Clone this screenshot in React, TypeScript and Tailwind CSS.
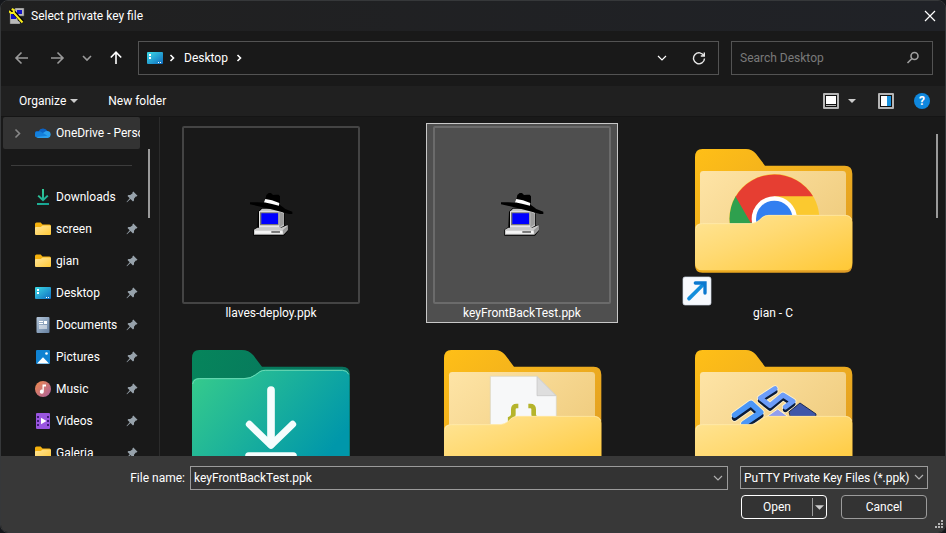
import type { ReactNode } from "react";

const places = [
  { name: "Downloads", icon: <DownloadIcon /> },
  { name: "screen", icon: <FolderIcon /> },
  { name: "gian", icon: <FolderIcon /> },
  { name: "Desktop", icon: <DesktopIcon /> },
  { name: "Documents", icon: <DocumentIcon /> },
  { name: "Pictures", icon: <PictureIcon /> },
  { name: "Music", icon: <MusicIcon /> },
  { name: "Videos", icon: <VideoIcon /> },
  { name: "Galeria", icon: <FolderIcon /> },
];

function DownloadIcon() {
  return (
    <svg className="size-4" viewBox="0 0 16 16" fill="none" stroke="url(#dl)" strokeWidth="2">
      <defs>
        <linearGradient id="dl" gradientUnits="userSpaceOnUse" x1="0" y1="0" x2="10" y2="16">
          <stop stopColor="#3bd69a" />
          <stop offset="1" stopColor="#16a394" />
        </linearGradient>
      </defs>
      <path d="M8 0v11M3.200 6.600 8 11.200l4.800-4.600M2 15h12" />
    </svg>
  );
}

function FolderIcon() {
  return (
    <svg className="size-4" viewBox="0 0 16 16">
      <path d="M0 3Q0 1.500 1.500 1.500H5.600L7.500 3.500H14.500Q16 3.500 16 5V13H0Z" fill="#f5b10d" />
      <path d="M0 7Q0 6 1 6H5.800L7.600 4.600H15Q16 4.600 16 5.600V13Q16 14 15 14H1Q0 14 0 13Z" fill="url(#front)" />
    </svg>
  );
}

function DesktopIcon() {
  return (
    <svg className="size-4" viewBox="0 0 16 16">
      <defs>
        <linearGradient id="desk" x1="0" y1="0" x2="1" y2="1">
          <stop stopColor="#3ddbe6" />
          <stop offset="1" stopColor="#0f6cc0" />
        </linearGradient>
      </defs>
      <rect y="2" width="16" height="12" rx="1" fill="url(#desk)" />
      <path d="M2 4h2v2H2zM2 7h2v2H2zM11 12h1v1h-1zM13 12h1v1h-1z" fill="#fff" />
    </svg>
  );
}

function DocumentIcon() {
  return (
    <svg className="size-4" viewBox="0 0 16 16">
      <defs>
        <linearGradient id="doc" x1="0" y1="0" x2="1" y2="1">
          <stop stopColor="#b4c6da" />
          <stop offset="1" stopColor="#6580a0" />
        </linearGradient>
      </defs>
      <rect x="1.500" width="13" height="16" rx="1" fill="url(#doc)" />
      <path d="M4 4h4v1H4zM4 6h4v1H4zM9 4h3v3H9zM4 8.500h8v1H4zM4 10.500h8v1H4z" fill="#fff" />
    </svg>
  );
}

function PictureIcon() {
  return (
    <svg className="size-4" viewBox="0 0 16 16">
      <rect x="1" y="1" width="14" height="14" rx="1" fill="#0f82d2" />
      <path d="M2 14.500 8 8.200l6 6.300Z" fill="#fff" />
      <circle cx="11.500" cy="4.500" r="1.300" fill="#fff" />
    </svg>
  );
}

function MusicIcon() {
  return (
    <svg className="size-4" viewBox="0 0 16 16">
      <defs>
        <linearGradient id="mus" x1="0" y1="0" x2="1" y2="1">
          <stop stopColor="#f08a4b" />
          <stop offset="1" stopColor="#a9609e" />
        </linearGradient>
      </defs>
      <circle cx="8" cy="8" r="8" fill="url(#mus)" />
      <path d="M7.500 3.500h3.500v2H8.800v5.200a2 2 0 1 1-1.300-1.900Z" fill="#fff" />
    </svg>
  );
}

function VideoIcon() {
  return (
    <svg className="size-4" viewBox="0 0 16 16">
      <rect x="1" width="14" height="16" rx="1" fill="#9a55e0" />
      <path d="M2 3h2v2H2zM2 7h2v2H2zM2 11h2v2H2zM12 3h2v2h-2zM12 7h2v2h-2zM12 11h2v2h-2z" fill="#3f1d77" />
      <path d="M6 4.800 11.500 8 6 11.200Z" fill="#fff" />
    </svg>
  );
}

function CloudIcon() {
  return (
    <svg className="size-4" viewBox="0 0 16 16">
      <path d="M3.500 6.500a5 5 0 0 1 9-.500L8 11 1 12A3 3 0 0 1 3.500 6.500Z" fill="#0b63c5" />
      <path d="M12.200 6.100A3.500 3.500 0 0 1 13 13H3.500A3.300 3.300 0 0 1 1 12L9.500 6.900a4 4 0 0 1 2.700-.8Z" fill="#2aa0ee" />
      <path d="M5 6.200 12.500 10.800 1.200 12A3 3 0 0 1 3 6.500Z" fill="#1480dc" />
    </svg>
  );
}

function Pin() {
  return (
    <svg className="size-3 shrink-0" viewBox="0 0 12 12">
      <path d="M7.300.5 11.500 4.700 10.600 5.600 9.800 5.500 8 7.700V9.600L7 10.500 4.500 8.100 1 11.300.5 10.900 3.700 7.300 1.500 5 2.400 4.100H4.200L6.600 2.200 6.400 1.400Z" fill="#97a2ab" />
    </svg>
  );
}

function Chevron({ className }: { className: string }) {
  return (
    <svg className={className} viewBox="0 0 10 10" fill="none" stroke="currentColor" strokeWidth="1.200">
      <path d="M1 3 5 7 9 3" />
    </svg>
  );
}

function Crumb() {
  return (
    <svg className="size-2" viewBox="0 0 8 8" fill="none" stroke="#fff" strokeWidth="1.600">
      <path d="M2.500 1 5.500 4 2.500 7" />
    </svg>
  );
}

function Caret() {
  return (
    <svg className="h-1 w-2" viewBox="0 0 8 4">
      <path d="M0 0H8L4 4Z" fill="#ccc" />
    </svg>
  );
}

function NavIcon({ d, label, className }: { d: string; label: string; className: string }) {
  return (
    <button aria-label={label} className={className}>
      <svg className="size-4" viewBox="0 0 16 16" fill="none" stroke="currentColor" strokeWidth="1.600">
        <path d={d} />
      </svg>
    </button>
  );
}

/* Disguised computer shown for PuTTY key files, inside a thin frame. */
function KeyFile({ selected }: { selected?: boolean }) {
  return (
    <svg viewBox="1 1 190 180" className="h-[180px] w-[190px]">
      <rect x="8" y="4" width="176" height="176" rx="1" fill="none" strokeWidth="2" stroke={selected ? "#6b6b6b" : "#444"} />
      <g transform="translate(-5 -8) scale(.33333)">
        <path d="M264 290 276 278H340V292L344 296V332L354 329V347L342 362H250V344L262 336Z" fill="#000" />
        <path d="M267 290 276 281H330L342 294V332L330 339H267Z" fill="#c4c4c4" />
        <path d="M267 289H328V337H267Z" fill="#e6e6e6" />
        <path d="M270 292H326V331H270Z" fill="#777" />
        <path d="M274 295H324V327H274Z" fill="#00f" />
        <path d="M328 290 341 296V328L328 337Z" fill="#9b9b9b" />
        <path d="M252 344 262 338H334L353 330V346L340 359H252Z" fill="#c9c9c9" />
        <path d="M255 347H338V356H255Z" fill="#f5f5f5" />
        <path d="M338 346 353 332V344L340 358Z" fill="#999" />
        <path d="M304 351H330" stroke="#000" strokeWidth="3" />
        <path d="M240 262H262L284 263 289 240 296 234H303L309 240 318 239H326L330 244V270L346 282 367 290V297H357L324 288 286 278 250 270 240 268Z" fill="#000" />
        <path d="M286 252 306 256 328 264 327 272 303 266 282 262Z" fill="#fff" />
      </g>
    </svg>
  );
}

/* Yellow folder with its content peeking out behind the front flap. */
function FolderThumb({ children, shortcut }: { children: ReactNode; shortcut?: boolean }) {
  return (
    <svg viewBox="1 1 190 180" className="h-[180px] w-[190px] overflow-visible">
      <g transform="translate(-7 -8) scale(.33333)">
        <path d="M75 127Q75 102 97 102H228Q246 102 258 116L285 152H524Q547 152 547 176V450Q547 473 524 473H97Q75 473 75 450Z" fill="url(#back)" />
        <path d="M90 178Q90 168 100 168H518Q528 168 528 178V400H90Z" fill="url(#paper)" />
        {children}
        <path d="M75 344Q75 325 97 325H240Q256 325 268 315L276 307Q286 300 296 300H524Q547 300 547 322V443Q547 466 524 466H97Q75 466 75 443Z" fill="url(#front)" />
        <path d="M78 340Q82 326 97 326H240Q256 326 268 316L276 308Q286 301 296 301H524Q540 301 545 314" fill="none" stroke="#ffedb5" strokeWidth="2" />
        {shortcut && (
          <g>
            <rect x="39" y="486" width="84" height="84" rx="6" fill="#f7f9fd" stroke="#d5dcea" strokeWidth="2" />
            <path d="M57 551 101 507" stroke="#128ddb" strokeWidth="11" strokeLinecap="round" />
            <path d="M76 504H105V534" fill="none" stroke="#0b78cf" strokeWidth="10" strokeLinecap="round" />
          </g>
        )}
      </g>
    </svg>
  );
}

function ChromeArt() {
  return (
    <g>
      <circle cx="313" cy="312" r="135" fill="#fbc92f" />
      <path d="M197 244A135 135 0 0 0 313 447L313 312Z" fill="#2ea04e" />
      <path d="M197 245A135 135 0 0 1 429 244H313V312L242 323Z" fill="#e63e32" />
      <circle cx="313" cy="312" r="68" fill="#fff" />
      <circle cx="313" cy="312" r="55" fill="#327ff0" />
    </g>
  );
}

function CodeArt() {
  return (
    <g transform="translate(3 57)">
      <path d="M211 124H351L409 182V300H211Z" fill="#f7f8f9" stroke="#d8d3c2" strokeWidth="2" />
      <path d="M351 125V182H408Z" fill="#dedede" stroke="#c4c4c4" strokeWidth="2" />
      <path d="M295 213H290Q280 213 280 223V238Q280 250 265 253Q280 256 280 268V290M325 213H331Q341 213 341 223V238Q341 250 356 253" fill="none" stroke="#b5b42c" strokeWidth="14" />
    </g>
  );
}

function BlocksArt() {
  const left = "M194 240 243 205 272 232 222 266";
  const middle = "M315 161 271 189 300 212 339 180 369 199 346 216";
  return (
    <g transform="translate(0 57)" strokeLinejoin="round" strokeLinecap="round" fill="none">
      <path d={left} stroke="#fff3cd" strokeWidth="22" />
      <path d={left} stroke="#fff3cd" strokeWidth="22" transform="translate(0 9)" />
      <path d={middle} stroke="#fff3cd" strokeWidth="20" />
      <path d={middle} stroke="#fff3cd" strokeWidth="20" transform="translate(0 8)" />
      <path d={left} stroke="#0b1c38" strokeWidth="17" transform="translate(0 9)" />
      <path d={left} stroke="#4b97f7" strokeWidth="17" />
      <path d={middle} stroke="#0b1c38" strokeWidth="15" transform="translate(0 8)" />
      <path d={middle} stroke="#6c9df9" strokeWidth="15" />
      <path d="M358 230 390 204 438 237 436 252H364Z" fill="#3f57a8" stroke="#182754" strokeWidth="3" />
      <path d="M286 248 323 222 361 250Z" fill="#929fee" stroke="#fff3cd" strokeWidth="3" />
    </g>
  );
}

function DownloadsThumb() {
  return (
    <svg viewBox="1 1 190 180" className="h-[180px] w-[190px]">
      <defs>
        <linearGradient id="teal" gradientUnits="userSpaceOnUse" x1="90" y1="120" x2="440" y2="400">
          <stop stopColor="#34c98d" />
          <stop offset="1" stopColor="#0097aa" />
        </linearGradient>
        <linearGradient id="green" x1="0" y1="0" x2="1" y2=".4">
          <stop stopColor="#06855b" />
          <stop offset="1" stopColor="#08705f" />
        </linearGradient>
      </defs>
      <g transform="translate(-5 11) scale(.33333)">
        <path d="M66 70Q66 45 88 45H216Q236 45 250 61L276 95H517Q540 95 540 119V393Q540 416 517 416H88Q66 416 66 393Z" fill="url(#green)" />
        <path d="M66 148Q66 129 88 129H222Q242 129 256 118L270 108Q276 104 286 104H517Q538 104 538 127V393Q538 416 517 416H88Q66 416 66 393Z" fill="url(#teal)" />
        <path d="M68 147Q72 131 88 131H222Q242 131 256 120L270 110Q276 106 286 106H517Q532 106 536 118" fill="none" stroke="#6bd9b5" strokeWidth="3" />
        <path d="M303 165V328" stroke="#f5fdfd" strokeWidth="23" strokeLinecap="round" />
        <path d="M238 268 303 331 368 268" fill="none" stroke="#f5fdfd" strokeWidth="21" strokeLinecap="round" strokeLinejoin="round" />
        <path d="M236 362H370" stroke="#f5fdfd" strokeWidth="21" strokeLinecap="round" />
      </g>
    </svg>
  );
}

function Tile({ name, selected, children }: { name?: string; selected?: boolean; children: ReactNode }) {
  return (
    <button
      aria-label={name ?? "Folder"}
      className={
        selected
          ? "flex h-[200px] flex-col items-center border border-[#c8c8c8] bg-[#4f4f4f]"
          : "flex h-[200px] flex-col items-center border border-transparent"
      }
    >
      {children}
      {name && <span className="leading-[18px]">{name}</span>}
    </button>
  );
}

export default function App() {
  return (
    <div className="h-screen bg-[#15171b] font-['Roboto','Open_Sans',sans-serif] text-[12px] leading-4 text-white">
      <svg className="absolute size-0" aria-hidden="true">
        <defs>
          <linearGradient id="front" x1="0" y1="0" x2="1" y2="1">
            <stop stopColor="#ffe597" />
            <stop offset=".4" stopColor="#ffda74" />
            <stop offset="1" stopColor="#ffc835" />
          </linearGradient>
          <linearGradient id="back" x1="0" y1="0" x2="1" y2="1">
            <stop stopColor="#ffbf17" />
            <stop offset="1" stopColor="#dd9a26" />
          </linearGradient>
          <linearGradient id="paper" x1="0" y1="0" x2="1" y2=".6">
            <stop stopColor="#fee4a6" />
            <stop offset="1" stopColor="#f0cd80" />
          </linearGradient>
        </defs>
      </svg>
      <main className="flex h-full flex-col overflow-hidden rounded-lg border border-[#36383a] bg-[#191919]">
        <header className="flex h-[30px] shrink-0 items-center bg-gradient-to-r from-[#202020] to-[#202227] pr-2 pl-2">
          <svg className="size-4" viewBox="0 0 16 16">
            <path d="M6 0h9v8h-4v1H6zM1 5h8v8h2v3H1z" fill="#b9b9b9" stroke="#555" strokeWidth=".5" />
            <path d="M8 2h5v4H8zM2 6h5v5H2z" fill="#1414c8" />
            <path d="M1.500 1.500 4.500 4 13.500 14" stroke="#000" strokeWidth="4" fill="none" />
            <path d="M0 3 2 5 5 5 13.500 14.500 M4.800 5V2L2.600 1" stroke="#f8ec1e" strokeWidth="2" fill="none" />
          </svg>
          <h1 className="ml-1.5 flex-1">Select private key file</h1>
          <button aria-label="Close">
            <svg className="size-3.5" viewBox="0 0 14 14" stroke="#fff" strokeWidth="1.200">
              <path d="M2 2 12 12M12 2 2 12" />
            </svg>
          </button>
        </header>

        <nav className="flex h-[55px] shrink-0 items-center pr-3 pb-px pl-[13px]">
          <NavIcon label="Back" className="text-[#9a9a9a]" d="M14 8H2.500M7.500 2.500 2 8l5.500 5.500" />
          <NavIcon label="Forward" className="ml-[19px] text-[#9a9a9a]" d="M2 8H13.500M8.500 2.500 14 8l-5.500 5.500" />
          <NavIcon label="Recent" className="ml-[14px] text-[#9a9a9a]" d="M4 6 8 10 12 6" />
          <NavIcon label="Up" className="ml-[13px] text-white" d="M8 14V2.500M2.800 7.500 8 2.200l5.200 5.300" />
          <div className="ml-[14px] flex h-[34px] flex-1 items-center border border-[#535353] pr-3 pl-2">
            <DesktopIcon />
            <span className="mr-1 ml-[5px]"><Crumb /></span>
            <button className="mx-1">Desktop</button>
            <span className="ml-[3px]"><Crumb /></span>
            <button aria-label="Previous locations" className="ml-auto">
              <Chevron className="size-2.5" />
            </button>
            <button aria-label="Refresh" className="ml-[25px]">
              <svg className="size-3.5" viewBox="0 0 14 14" fill="none" stroke="#e8e8e8" strokeWidth="1.400">
                <path d="M12 5A5.500 5.500 0 1 0 12.500 7.500M12.300 1.500V5H8.800" />
              </svg>
            </button>
          </div>
          <label className="ml-3 flex h-[34px] w-[202px] items-center border border-[#535353] pr-3 pl-2">
            <input type="search" aria-label="Search Desktop" placeholder="Search Desktop" className="min-w-0 flex-1 bg-transparent outline-none placeholder:text-[#7a7a7a]" />
            <svg className="size-3.5" viewBox="0 0 14 14" fill="none" stroke="#a0a0a0" strokeWidth="1.600">
              <circle cx="8.500" cy="5" r="3.500" />
              <path d="M6 7.500 1.500 12" />
            </svg>
          </label>
        </nav>

        <div className="flex h-[31px] shrink-0 items-center border-b border-[#151515] bg-[#202020] pr-[15px] pl-[18px]">
          <button className="flex items-center gap-1">
            Organize
            <Caret />
          </button>
          <button className="ml-[30px]">New folder</button>
          <button aria-label="View" className="ml-auto">
            <svg className="size-4" viewBox="0 0 16 16">
              <rect width="16" height="16" rx="1" fill="#b5b5b5" />
              <rect x="2" y="2" width="12" height="12" fill="#111" />
              <rect x="3" y="3" width="10" height="8" fill="#fff" />
              <path d="M3 12.500H13" stroke="#b5b5b5" />
            </svg>
          </button>
          <button aria-label="More view options" className="ml-[9px]">
            <Caret />
          </button>
          <button aria-label="Preview pane" className="ml-[22px]">
            <svg className="size-4" viewBox="0 0 16 16">
              <rect width="16" height="16" rx="1" fill="#b5b5b5" />
              <rect x="2" y="2" width="12" height="12" fill="#111" />
              <rect x="3" y="3" width="6" height="10" fill="#fff" />
              <rect x="9" y="3" width="4" height="10" fill="#1793e0" />
            </svg>
          </button>
          <button aria-label="Help" className="ml-5 size-4 rounded-full bg-[#0f87dd] text-[12px] font-bold">?</button>
        </div>

        <div className="flex min-h-0 flex-1">
          <aside className="flex w-[159px] shrink-0 border-r border-[#2b2b2b] pl-0.5">
            <div className="w-[137px] overflow-hidden">
              <button className="flex h-8 w-full items-center overflow-hidden rounded-xs bg-[#333] pl-[9px] whitespace-nowrap">
                <svg className="mr-3 size-[11px] shrink-0" viewBox="0 0 11 11" fill="none" stroke="#888" strokeWidth="1.600">
                  <path d="M3.500 1.500 7.500 5.500 3.500 9.500" />
                </svg>
                <span className="mr-[5px] shrink-0"><CloudIcon /></span>
                OneDrive - Personal
              </button>
              <hr className="mx-2 my-4 border-0 border-t border-[#3c3c3c]" />
              <ul className="-mt-px">
                {places.map((p) => (
                  <li key={p.name}>
                    <button className="flex h-8 w-full items-center pr-0.5 pl-8 text-left">
                      {p.icon}
                      <span className="ml-[5px] flex-1">{p.name}</span>
                      <Pin />
                    </button>
                  </li>
                ))}
              </ul>
            </div>
            <div className="mt-8 ml-2 h-[69px] w-0.5 bg-[#9a9a9a]" />
          </aside>
          <section className="grid flex-1 grid-cols-[repeat(auto-fill,192px)] content-start gap-x-[59px] gap-y-px overflow-hidden pt-1.5 pl-[15px]">
            <Tile name="llaves-deploy.ppk"><KeyFile /></Tile>
            <Tile name="keyFrontBackTest.ppk" selected><KeyFile selected /></Tile>
            <Tile name="gian - C"><FolderThumb shortcut><ChromeArt /></FolderThumb></Tile>
            <Tile><DownloadsThumb /></Tile>
            <Tile><FolderThumb><CodeArt /></FolderThumb></Tile>
            <Tile><FolderThumb><BlocksArt /></FolderThumb></Tile>
          </section>
          <div className="mt-[17px] mr-[7px] h-[84px] w-0.5 bg-[#9a9a9a]" />
        </div>

        <footer className="flex h-[76px] shrink-0 bg-[#383838] pt-2.5 pr-[17px]">
          <div className="flex h-6 flex-1 items-center">
            <label htmlFor="file" className="w-[184px] text-right">File name:</label>
            <div className="ml-[5px] flex h-6 flex-1 items-center border border-[#9b9b9b] bg-[#333] pr-1 pl-[3px]">
              <input id="file" defaultValue="keyFrontBackTest.ppk" className="min-w-0 flex-1 bg-transparent outline-none" />
              <button aria-label="Show recent files"><Chevron className="size-2.5 text-[#b0b0b0]" /></button>
            </div>
          </div>
          <div className="ml-3 w-[188px]">
            <div className="relative">
              <select aria-label="File type" className="block h-[23px] w-full appearance-none border border-[#9b9b9b] bg-[#333] pl-[3px] outline-none">
                <option>PuTTY Private Key Files (*.ppk)</option>
              </select>
              <Chevron className="pointer-events-none absolute top-1.5 right-1 size-2.5 text-[#b0b0b0]" />
            </div>
            <div className="mt-1.5 flex justify-between px-px">
              <div className="flex h-6 w-[86px] items-center rounded-sm border border-white bg-[#333]">
                <button className="flex-1">Open</button>
                <button aria-label="More open options" className="flex h-[18px] items-center border-l border-[#9b9b9b] px-0.5">
                  <svg className="h-[5px] w-[9px]" viewBox="0 0 10 5"><path d="M0 0H10L5 5Z" fill="#ccc" /></svg>
                </button>
              </div>
              <button className="h-6 w-[86px] rounded-sm border border-[#9b9b9b] bg-[#333]">Cancel</button>
            </div>
          </div>
          <svg className="-mr-4 mb-0.5 ml-1.5 size-2.5 self-end" viewBox="0 0 10 10" fill="#b5b5b5">
            <path d="M7 0h2v2H7zM4 3h2v2H4zM7 3h2v2H7zM1 6h2v2H1zM4 6h2v2H4zM7 6h2v2H7z" />
          </svg>
        </footer>
      </main>
    </div>
  );
}
